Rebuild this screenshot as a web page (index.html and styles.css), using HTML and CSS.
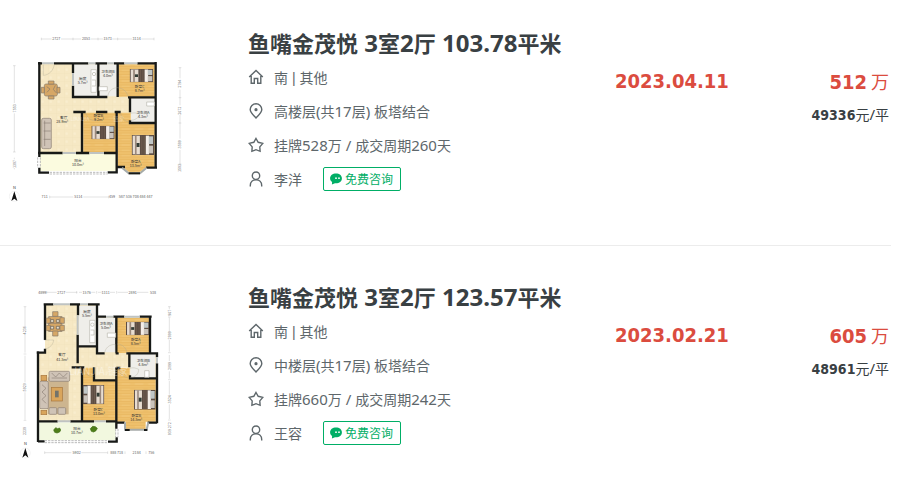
FILE: index.html
```html
<!DOCTYPE html>
<html lang="zh-CN">
<head>
<meta charset="utf-8">
<title>鱼嘴金茂悦 成交</title>
<link rel="stylesheet" href="styles.css">
</head>
<body>
<svg class="sprite" aria-hidden="true">
  <defs>
    <pattern id="tile" width="24" height="24" patternUnits="userSpaceOnUse">
      <rect width="24" height="24" fill="#f6e8c4"/><path d="M0 0h24M0 0v24" stroke="#f1e0b6" stroke-width="1.5"/><circle cx="8" cy="14" r="4" fill="#f9edcd"/>
    </pattern>
    <pattern id="wood" width="40" height="16" patternUnits="userSpaceOnUse">
      <rect width="40" height="16" fill="#eec06c"/><path d="M0 4h40M0 12h40" stroke="#e7b65e" stroke-width="2"/><path d="M5 8h25" stroke="#f4cc82" stroke-width="2"/>
    </pattern>
    <symbol id="home" viewBox="0 0 16 16"><path d="M1.2 8 8 1.5 14.8 8M3.2 7v7.3h3.1V9.5h3.4v4.8h3.1V7"/></symbol>
    <symbol id="pin" viewBox="0 0 16 16"><path d="M8 15C5.200 12 2.200 9.500 2.200 6.600a5.800 5.800 0 0 1 11.600 0C13.800 9.500 10.800 12 8 15z"/><circle cx="8" cy="6.700" r=".9" fill="currentColor"/></symbol>
    <symbol id="star" viewBox="0 0 16 16"><path d="M8 1.500 10.200 5.300 14.800 6.400 11.800 9.900 12.100 14.300 8 12.700 3.900 14.300 4.200 9.900 1.200 6.400 5.800 5.300z"/></symbol>
    <symbol id="user" viewBox="0 0 16 16"><circle cx="8" cy="4.700" r="3.700"/><path d="M2.300 15.500V14.500C2.300 11 4.800 8.800 8 8.800s5.700 2.200 5.700 5.700v1"/></symbol>
    <symbol id="chat" viewBox="0 0 12 12"><path d="M6 0.500c3.400 0 5.900 2 5.900 4.900S9.400 10.200 6 10.200H5L1.900 11.600 2.100 9C.8 8.100.1 6.900.1 5.400.1 2.500 2.600.5 6 .5z" fill="currentColor"/><circle cx="6" cy="5.200" r=".9" fill="#fff"/><circle cx="9" cy="5.200" r=".9" fill="#fff"/></symbol>
    <symbol id="bed" viewBox="0 0 68 60" preserveAspectRatio="none">
      <rect width="68" height="60" fill="#5d4d43"/><rect x="3" y="2" width="22" height="56" fill="#e8ddd1"/><rect x="10" y="2" width="5" height="56" fill="#9b897c"/><rect x="43" y="2" width="10" height="56" fill="#f4eee8"/><rect x="52" y="4" width="13" height="23" fill="#bfc6c6"/><rect x="52" y="32" width="13" height="23" fill="#c9c3bb"/><rect x="15" y="24" width="9" height="12" fill="#343c35"/><path d="M31 2v56M38 2v56" stroke="#796557" stroke-width="2"/>
    </symbol>
    <symbol id="compass" viewBox="0 0 36 54">
      <text x="18" y="13" class="compass-label">N</text><circle cx="18" cy="36" r="15" fill="none" stroke="#ddd"/><path d="M18 21 27 50 18 43 9 50z" fill="#111"/>
    </symbol>
  </defs>
</svg>

<ul class="deals">
  <li class="deal">
    <a class="plan" href="#" aria-label="鱼嘴金茂悦 3室2厅 103.78平米">
      <svg viewBox="0 0 600 555">
        <path d="M118 115H464V428L440 428 420 444H386L366 428H352V385H118z" fill="url(#tile)"/>
        <path d="M355 118H464V215H355zM250 263H350V383H250zM354 263H392V294H464V426H440L418 442H388L368 426H354z" fill="url(#wood)"/>
        <path d="M222 118H293V214H222zM298 118H351V214H298zM393 220H464V293H393z" fill="#efeeea"/>
        <path d="M120 385H348V438H120z" fill="#fbfbdf"/>
        <g class="wall">
          <path d="M114 115H126M118 111V396M114 384H188M228 384H268M312 384H350M162 115H265M286 115H321M342 115H373M412 115H470M467 111V430M219 115V144M219 182V216H322M295 115V216M353 115V216M384 217H467M390 217V262M390 286V294H467M220 261H257M246 261V384M288 261H322M350 261V430M344 261H362M118 428V443H147M323 442H350V426H375M438 428H471"/>
        </g>
        <path d="M366 428 386 445H420L440 428" class="bay"/>
        <path d="M386 445H420" class="wall-thin"/>
        <g class="window">
          <path d="M126 115H162M265 115H286M321 115H342M373 115H412"/>
          <path d="M188 384H228M268 384H312M219 144V182"/>
        </g>
        <path class="dashed" d="M149 442H323M149 447H323M113 397V428M121 397V428"/>
        <path class="door" d="M130 119V151C147 150 159 138 163 119M323 216C325 197 338 188 353 188M353 188C370 190 382 201 384 216M362 262C363 278 374 290 388 291M390 286C404 286 417 279 419 267C410 263 399 263 391 265M257 262C261 278 270 287 288 287V262"/>
        <g class="dining">
          <rect x="133" y="177" width="39" height="36" rx="5"/><path d="M145 168h17v9h-17zM145 213h17v9h-17zM124 187h9v17h-9zM171 187h9v17h-9z"/>
          <path d="M140 185l10 7-9 10M166 181l-6 12 8 10" fill="none"/>
        </g>
        <g class="sofa"><rect x="125" y="280" width="29" height="91" rx="5"/><path d="M131 294h21M131 318h21M131 343h21M134 287v76" fill="none"/></g>
        <use href="#bed" x="389" y="132" width="71" height="40"/>
        <use href="#bed" x="274" y="302" width="70" height="41"/>
        <use href="#bed" x="395" y="330" width="67" height="60"/>
        <g class="fixture"><path d="M273 134H289V202H273zM297 185H322V197H297zM440 231H463V243H440z"/><circle cx="282" cy="147" r="5"/><path d="M276 165h11v18h-11"/></g>
        <text class="watermark small" x="240" y="288">LIANJIA</text>
        <text class="watermark small" x="356" y="288">链家</text>
        <g class="room-label">
          <text x="248" y="166">厨房</text><text x="248" y="178">5.7m²</text>
          <text x="324" y="144">卫生间B</text><text x="324" y="157">4.0m²</text>
          <text x="419" y="188">卧室C</text><text x="419" y="200">8.7m²</text>
          <text x="191" y="281">客厅</text><text x="187" y="294">28.9m²</text>
          <text x="295" y="275">卧室B</text><text x="297" y="287">9.2m²</text>
          <text x="429" y="266">卫生间A</text><text x="429" y="278">4.3m²</text>
          <text x="234" y="411">阳台</text><text x="234" y="423">10.0m²</text>
          <text x="407" y="413">卧室A</text><text x="407" y="425">13.5m²</text>
        </g>
        <g class="measure">
          <path d="M124 42H155M183 42H243M272 42H310M337 42H396M424 42H462M43 122V234M43 265V381M43 398V403M43 429V433M540 128V160M540 194V241M540 270V341M540 375V417M149 516H220M250 516H326"/>
          <path d="M124 38v8M219 38v8M294 38v8M353 38v8M462 38v8M39 122h8M39 381h8M536 128h8M536 218h8M536 294h8M536 417h8M149 512v8M326 512v8"/>
        </g>
        <g class="measure-label">
          <text x="169" y="46">2727</text><text x="258" y="46">2053</text><text x="323" y="46">1573</text><text x="410" y="46">3114</text>
          <text x="134" y="520">711</text><text x="235" y="520">5114</text><text x="336" y="520">459</text><text x="407" y="520">587 536 708 484 447</text>
          <text transform="translate(47 250) rotate(-90)">7553</text><text transform="translate(47 417) rotate(-90)">1387</text><text transform="translate(544 176) rotate(-90)">2794</text><text transform="translate(544 257) rotate(-90)">2072</text><text transform="translate(544 358) rotate(-90)">3589</text><text transform="translate(544 429) rotate(-90)">1583</text>
        </g>
        <use href="#compass" x="25" y="478" width="36" height="54"/>
      </svg>
    </a>
    <div class="info">
      <h2 class="title"><a href="#">鱼嘴金茂悦<span class="latin"> 3</span>室<span class="latin">2</span>厅<span class="latin"> 103.78</span>平米</a></h2>
      <div class="row"><svg class="icon"><use href="#home"/></svg><span>南<span class="divider"> | </span>其他</span></div>
      <div class="row"><svg class="icon"><use href="#pin"/></svg><span>高楼层<span class="latin">(</span>共<span class="latin">17</span>层<span class="latin">) </span>板塔结合</span></div>
      <div class="row"><svg class="icon"><use href="#star"/></svg><span>挂牌<span class="latin">528</span>万<span class="latin"> / </span>成交周期<span class="latin">260</span>天</span></div>
      <div class="row"><svg class="icon"><use href="#user"/></svg><a class="agent" href="#">李洋</a><button class="consult" type="button"><svg class="chat"><use href="#chat"/></svg>免费咨询</button></div>
    </div>
    <time class="date" datetime="2023-04-11">2023.04.11</time>
    <div class="price"><div class="total"><strong>512</strong> 万</div><div class="unit"><strong>49336</strong>元<span class="latin">/</span>平</div></div>
  </li>

  <li class="deal">
    <a class="plan" href="#" aria-label="鱼嘴金茂悦 3室2厅 123.57平米">
      <svg viewBox="0 -3 600 555">
        <path d="M135 74H291V110H451V220H470V425H348V424H114V218H135z" fill="url(#tile)"/>
        <path d="M351 114H449V219H351zM248 263H281V302H347V422H248zM351 264H389V296H467V425H437V448H378V425H351z" fill="url(#wood)"/>
        <path d="M236 78H288V198H236zM293 114H347V217H293zM391 222H466V294H391z" fill="#efeeea"/>
        <path d="M118 427H347V480H118z" fill="#f2f8df"/>
        <g class="wall">
          <path d="M131 73H160M210 73H240M264 73H299M135 70V180M135 206V218H110M114 214V486M114 484H134M114 424H173M211 424H282M318 424H350M234 73V106M233 164V250M233 199H289M291 73V199M291 110H318M340 110H373M419 110H455M291 199V220H314M347 220H356M349 110V220M379 220H471M450 107V220M388 220V262M390 286V295H471M471 217V232M471 250V430M215 262H253M246 262V424M282 262V301H349M349 262V446M349 264H361M324 485H350V472M349 428H374M443 428H471"/>
        </g>
        <path d="M375 427V449H440L445 427" class="bay"/>
        <path class="wall-thin" d="M375 450H389M432 450H442"/>
        <g class="window">
          <path d="M160 73H210M240 73H264M318 110H340M373 110H419M471 232V250"/>
          <path d="M173 424H211M282 424H318M233 106V164"/>
        </g>
        <path class="dashed" d="M134 482H324M134 488H324M347 447V472M354 447V472"/>
        <path class="door" d="M133 180H161C160 193 150 204 135 207M314 220C315 205 327 193 346 193V220M351 192C369 193 379 204 381 220M356 264C358 281 371 293 387 294M390 292C407 292 416 282 416 268C406 263 398 262 390 265M252 264C253 281 262 289 281 290"/>
        <g class="dining">
          <rect x="146" y="110" width="40" height="44"/><path d="M158 95h16v14h-16zM139 114h12v16h-12zM180 113h13v17h-13zM139 136h12v16h-12zM180 136h13v16h-13zM158 153h16v15h-16zM146 130h40"/>
          <path d="M152 119h9v8h-9zM169 119h9v8h-9zM152 139h9v8h-9zM169 139h9v8h-9z" class="plate"/>
        </g>
        <rect x="143" y="292" width="63" height="111" fill="#cdb58f"/>
        <g class="sofa"><rect x="147" y="274" width="62" height="30" rx="4"/><path d="M155 279l12 12 11-12 12 12 12-12M155 294h46" fill="none"/><rect x="119" y="304" width="26" height="82" rx="4"/><path d="M126 314l12 11-12 11 12 11-12 11 12 12" fill="none"/><rect x="147" y="383" width="23" height="20" rx="3"/><rect x="174" y="383" width="23" height="20" rx="3"/></g>
        <g class="wooden"><rect x="154" y="322" width="33" height="41"/><rect x="123" y="286" width="17" height="16"/><rect x="123" y="391" width="17" height="13"/></g>
        <rect x="165" y="332" width="11" height="20" fill="#72736b"/>
        <use href="#bed" x="378" y="125" width="70" height="41"/>
        <use href="#bed" transform="translate(313 315) scale(-1 1)" width="65" height="58"/>
        <use href="#bed" x="402" y="329" width="65" height="60"/>
        <g class="fixture"><path d="M269 121H285V188H269zM322 159H347V172H322zM434 272H447V292H434z"/><circle cx="277" cy="134" r="5"/><path d="M272 150h10v15h-10"/></g>
        <g class="plants"><path d="M161 450l6-7 6 3 6-2 3 6-3 6-8 3-7-2zM271 446l7-7 8 1 6 5-4 7-7 4-7-2z"/></g>
        <text class="watermark" x="295" y="285">LIANJIA.链家</text>
        <g class="room-label">
          <text x="261" y="98">厨房</text><text x="261" y="110">5.5m²</text>
          <text x="318" y="134">卫生间A</text><text x="318" y="146">5.0m²</text>
          <text x="407" y="183">卧室A</text><text x="407" y="195">8.5m²</text>
          <text x="186" y="229">客厅</text><text x="187" y="242">41.5m²</text>
          <text x="430" y="245">卫生间B</text><text x="430" y="257">4.8m²</text>
          <text x="295" y="394">卧室C</text><text x="297" y="406">13.0m²</text>
          <text x="409" y="412">卧室B</text><text x="409" y="424">14.5m²</text>
          <text x="231" y="450">阳台</text><text x="231" y="462">10.7m²</text>
        </g>
        <g class="measure">
          <path d="M140 37H170M197 37H232M237 37H246M274 37H286M294 37H305M330 37H345M353 37H384M411 37H445M75 80V138M75 165V218M75 227V307M75 337V419M508 80V88M508 112V153M508 179V215M508 225V243M508 274V296M508 303V344M508 373V417M134 518H214M244 518H323"/>
          <path d="M140 33v8M230 33v8M290 33v8M350 33v8M71 80h8M71 222h8M71 421h8M504 80h8M504 111h8M504 218h8M504 299h8M504 420h8M134 514v8M323 514v8M375 514v8M438 514v8"/>
        </g>
        <g class="measure-label">
          <text x="127" y="41">4899</text><text x="184" y="41">2727</text><text x="260" y="41">1576</text><text x="317" y="41">1311</text><text x="398" y="41">2891</text><text x="459" y="41">538</text>
          <text x="230" y="522">5902</text><text x="350" y="522">888 718</text><text x="410" y="522">2184</text><text x="454" y="522">756</text>
          <text transform="translate(79 151) rotate(-90)">4236</text><text transform="translate(79 322) rotate(-90)">5920</text><text transform="translate(79 453) rotate(-90)">2238</text><text transform="translate(512 98) rotate(-90)">907</text><text transform="translate(512 166) rotate(-90)">2899</text><text transform="translate(512 258) rotate(-90)">2099</text><text transform="translate(512 358) rotate(-90)">3524</text><text transform="translate(512 446) rotate(-90)">939 272</text>
        </g>
        <use href="#compass" x="58" y="483" width="36" height="54"/>
      </svg>
    </a>
    <div class="info">
      <h2 class="title"><a href="#">鱼嘴金茂悦<span class="latin"> 3</span>室<span class="latin">2</span>厅<span class="latin"> 123.57</span>平米</a></h2>
      <div class="row"><svg class="icon"><use href="#home"/></svg><span>南<span class="divider"> | </span>其他</span></div>
      <div class="row"><svg class="icon"><use href="#pin"/></svg><span>中楼层<span class="latin">(</span>共<span class="latin">17</span>层<span class="latin">) </span>板塔结合</span></div>
      <div class="row"><svg class="icon"><use href="#star"/></svg><span>挂牌<span class="latin">660</span>万<span class="latin"> / </span>成交周期<span class="latin">242</span>天</span></div>
      <div class="row"><svg class="icon"><use href="#user"/></svg><a class="agent" href="#">王容</a><button class="consult" type="button"><svg class="chat"><use href="#chat"/></svg>免费咨询</button></div>
    </div>
    <time class="date" datetime="2023-02-21">2023.02.21</time>
    <div class="price"><div class="total"><strong>605</strong> 万</div><div class="unit"><strong>48961</strong>元<span class="latin">/</span>平</div></div>
  </li>
</ul>
</body>
</html>
```
FILE: styles.css
```css
* { box-sizing: border-box; }

body {
  margin: 0;
  background: #fff;
  color: #5e676b;
  font: 14px/34px "Noto Sans CJK SC", sans-serif;
}

a { color: inherit; text-decoration: none; }

.sprite { position: absolute; width: 0; height: 0; }

.deals {
  margin: 0;
  padding: 0 31px 0 0;
  list-style: none;
}

.deal {
  display: grid;
  grid-template-columns: 248px minmax(320px, 1fr) 156px 120px;
  align-items: start;
  padding: 33px 0 35px;
  border-bottom: 1px solid #ececec;
}
.deal:first-child { padding-top: 25px; }
.deal:last-child { border-bottom: 0; padding-bottom: 0; }

.plan, .plan svg { display: block; width: 200px; height: 185px; }

.latin { font-family: "Noto Sans", sans-serif; font-size: 15px; line-height: 1; white-space: pre; }
.divider { font-family: "Liberation Sans", sans-serif; line-height: 1; white-space: pre; }

.title {
  margin: 0 0 1px;
  color: #394043;
  font-size: 22px;
  line-height: 34px;
  font-weight: 700;
}
.title .latin { font-size: 24px; }

.row {
  display: flex;
  align-items: center;
  height: 34px;
  white-space: nowrap;
}

.icon {
  width: 16px;
  height: 16px;
  margin-right: 10px;
  overflow: visible;
  fill: none;
  stroke: currentColor;
  stroke-width: 1.4px;
}

.agent { margin-right: 21px; }

.consult {
  display: flex;
  align-items: center;
  gap: 3px;
  height: 24px;
  padding: 0 7px 0 6px;
  border: 1px solid #00ae66;
  border-radius: 2px;
  background: #fff;
  color: #00ae66;
  font: 12px/22px "Noto Sans CJK SC", sans-serif;
}
.chat { width: 12px; height: 12px; }

.date, .price strong { font-family: "DejaVu Sans Condensed", "DejaVu Sans", sans-serif; font-stretch: condensed; font-weight: 700; }

.date {
  padding-top: 39px;
  color: #db4c3f;
  font-size: 20px;
}

.price { padding: 39px 2px 0 0; text-align: right; white-space: nowrap; }
.total { color: #db4c3f; font-size: 18px; }
.total strong { font-size: 20px; }
.unit { color: #394043; line-height: 30px; }

/* Floor plans */
.wall { fill: none; stroke: #171917; stroke-width: 7px; }
.wall-thin { fill: none; stroke: #171917; stroke-width: 6px; }
.window { fill: none; stroke: #bfc3c2; stroke-width: 6px; }
.bay { fill: none; stroke: #a6aba9; stroke-width: 6px; }
.dashed { fill: none; stroke: #bbb; stroke-width: 3px; stroke-dasharray: 7px 3px; }
.door { fill: none; stroke: #a8a391; stroke-width: 1px; }
.dining { fill: #d6a766; stroke: #85796a; stroke-width: 2px; }
.dining .plate { fill: #e9dfca; stroke: #5d5750; stroke-width: 2px; }
.sofa { fill: #cfc3b6; stroke: #8d8075; stroke-width: 2px; }
.wooden { fill: #d9a55c; stroke: #a9773e; stroke-width: 2px; }
.fixture { fill: #fff; stroke: #b9b8ad; stroke-width: 2px; }
.plants { fill: #4d7d18; stroke: #3e6b14; stroke-width: 2px; }
.room-label { fill: #333; font-size: 11px; line-height: 1; text-anchor: middle; }
.measure { fill: none; stroke: #aaa; stroke-width: 1px; }
.measure-label { fill: #666; font-size: 11px; line-height: 1; text-anchor: middle; }
.compass-label { fill: #333; font-size: 12px; line-height: 1; text-anchor: middle; }
.watermark { fill: #fff; fill-opacity: 0.4; font-size: 30px; line-height: 1; text-anchor: middle; }
.watermark.small { font-size: 16px; }
```
